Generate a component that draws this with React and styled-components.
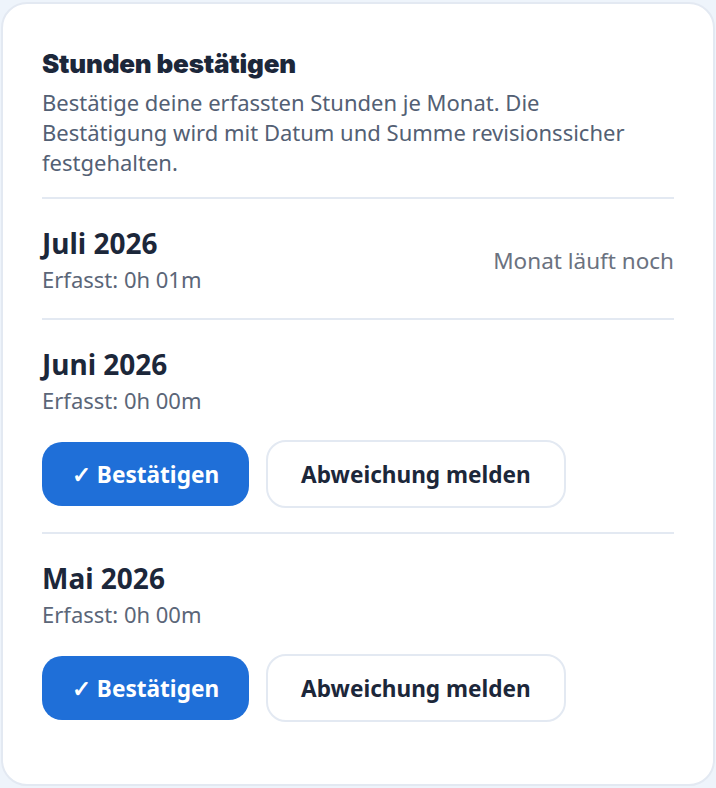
import React from "react";
import styled, { createGlobalStyle } from "styled-components";

const Global = createGlobalStyle`
  html, body { margin: 0; padding: 0; background: #eef4fb; }
  body { font-family: "Noto Sans", "Open Sans", sans-serif; }
  * { box-sizing: border-box; }
`;

const Card = styled.div`
  margin: 2px 1px 2px 1px;
  width: 714px;
  height: 784px;
  background: #ffffff;
  border: 2px solid #e3e9f2;
  border-radius: 26px;
  padding: 44px 39px 0 39px;
  display: flex;
  flex-direction: column;
`;

const Title = styled.h1`
  margin: 0;
  font-family: "Inter", "Noto Sans", sans-serif;
  font-weight: 900;
  font-size: 26px;
  line-height: 32px;
  letter-spacing: -0.2px;
  color: #1c273a;
`;

const Desc = styled.p`
  margin: 7px 0 20px 0;
  max-width: 614px;
  font-size: 22px;
  line-height: 30px;
  color: #536074;
`;

const Section = styled.section`
  border-top: 2px solid #e3e9f2;
  padding: 27px 0 24px 0;
  display: flex;
  flex-direction: column;
`;

const Row = styled.div`
  display: flex;
  align-items: center;
  justify-content: space-between;
`;

const Month = styled.h2`
  margin: 0;
  font-size: 28px;
  line-height: 34px;
  font-weight: 700;
  color: #1c273a;
`;

const Sub = styled.div`
  margin-top: 4px;
  font-size: 22px;
  line-height: 30px;
  color: #5b6678;
`;

const Status = styled.div`
  font-size: 22.5px;
  color: #6b7280;
`;

const Actions = styled.div`
  display: flex;
  align-items: center;
  gap: 17px;
  margin-top: 25px;
`;

const Button = styled.button`
  font-family: "Noto Sans", sans-serif;
  font-weight: 700;
  font-size: 22.6px;
  border-radius: 20px;
  cursor: pointer;
  height: ${(p) => (p.$primary ? "64px" : "68px")};
  padding: 0 ${(p) => (p.$primary ? "30px" : "33px")};
  background: ${(p) => (p.$primary ? "#1f6fd8" : "#ffffff")};
  color: ${(p) => (p.$primary ? "#ffffff" : "#1c273a")};
  border: ${(p) => (p.$primary ? "none" : "2px solid #e3e9f2")};
`;

const months = [
  { name: "Juli 2026", value: "0h 01m", running: true },
  { name: "Juni 2026", value: "0h 00m" },
  { name: "Mai 2026", value: "0h 00m" },
];

export default function App() {
  return (
    <>
      <Global />
      <Card>
        <Title>Stunden bestätigen</Title>
        <Desc>
          Bestätige deine erfassten Stunden je Monat. Die Bestätigung wird mit
          Datum und Summe revisionssicher festgehalten.
        </Desc>
        {months.map((m) => (
          <Section key={m.name}>
            <Row>
              <div>
                <Month>{m.name}</Month>
                <Sub>Erfasst: {m.value}</Sub>
              </div>
              {m.running && <Status>Monat läuft noch</Status>}
            </Row>
            {!m.running && (
              <Actions>
                <Button $primary>✓ Bestätigen</Button>
                <Button>Abweichung melden</Button>
              </Actions>
            )}
          </Section>
        ))}
      </Card>
    </>
  );
}
